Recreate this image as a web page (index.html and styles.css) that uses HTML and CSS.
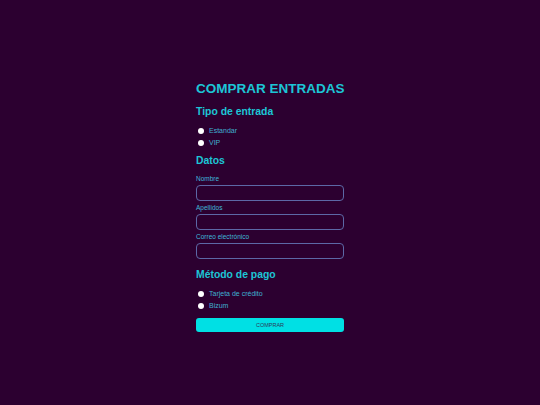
FILE: index.html
```html
<!DOCTYPE html>
<html lang="es">
<head>
<meta charset="utf-8">
<link rel="stylesheet" href="styles.css">
</head>
<body>
<main class="page">
  <form class="form">
    <h1 class="title">COMPRAR ENTRADAS</h1>
    <h2 class="section">Tipo de entrada</h2>
    <div class="radios">
      <label class="radio"><span class="dot"></span>Estandar</label>
      <label class="radio"><span class="dot"></span>VIP</label>
    </div>
    <h2 class="section">Datos</h2>
    <div class="field">
      <span class="label">Nombre</span>
      <span class="input"></span>
    </div>
    <div class="field">
      <span class="label">Apellidos</span>
      <span class="input"></span>
    </div>
    <div class="field">
      <span class="label">Correo electrónico</span>
      <span class="input"></span>
    </div>
    <h2 class="section">Método de pago</h2>
    <div class="radios">
      <label class="radio"><span class="dot"></span>Tarjeta de crédito</label>
      <label class="radio"><span class="dot"></span>Bizum</label>
    </div>
    <button type="button" class="btn">COMPRAR</button>
  </form>
</main>
</body>
</html>
```
FILE: styles.css
```css
html, body {
  margin: 0;
  padding: 0;
  background: #2c0030;
  font-family: "Liberation Sans", Arial, sans-serif;
}
.page {
  width: 540px;
  height: 405px;
  display: flex;
  justify-content: center;
}
.form {
  width: 148px;
  padding-top: 80px;
  display: flex;
  flex-direction: column;
}
.title {
  margin: 0;
  font-size: 13.5px;
  font-weight: bold;
  color: #1cc6d6;
  line-height: 17px;
  white-space: nowrap;
}
.section {
  margin: 0;
  font-size: 10.4px;
  font-weight: bold;
  color: #1cc6d6;
  line-height: 13px;
}
.title + .section { margin-top: 8px; }
.radios {
  display: flex;
  flex-direction: column;
  gap: 3px;
  margin-top: 8px;
  margin-bottom: 7px;
}
.radio {
  display: flex;
  align-items: center;
  gap: 5px;
  font-size: 7px;
  line-height: 9px;
  color: #3fb0d0;
  padding-left: 2px;
}
.dot {
  width: 6px;
  height: 6px;
  border-radius: 50%;
  background: #ffffff;
}
.field {
  display: flex;
  flex-direction: column;
  margin-top: 3px;
}
.section + .field { margin-top: 8px; }
.label {
  font-size: 6.5px;
  line-height: 8px;
  color: #3fb8d8;
  margin-bottom: 2px;
}
.input {
  height: 14px;
  border: 1px solid #5c68a6;
  border-radius: 4px;
}
.field + .section { margin-top: 9px; }
.btn {
  margin-top: 1px;
  height: 14px;
  border: none;
  border-radius: 3px;
  background: #00e0e4;
  color: #2c3a5a;
  font-family: "Liberation Sans", Arial, sans-serif;
  font-size: 5.5px;
  padding: 0;
}
```
